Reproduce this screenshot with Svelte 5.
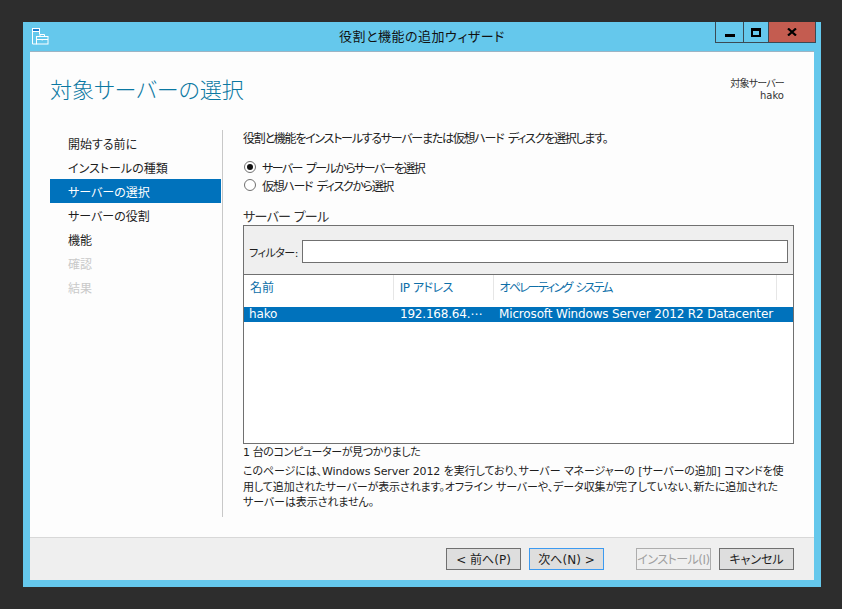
<script>
  const steps = [
    { label: '開始する前に' },
    { label: 'インストールの種類' },
    { label: 'サーバーの選択', active: true },
    { label: 'サーバーの役割' },
    { label: '機能' },
    { label: '確認', disabled: true },
    { label: '結果', disabled: true }
  ];
</script>

<div class="window">
  <div class="titlebar">
    <svg class="appicon" width="17" height="17" viewBox="0 0 17 17">
      <rect x="0.500" y="0.500" width="7" height="3" fill="#1f7fd0" stroke="#fff"/>
      <path d="M0.500 3.500v12.500h4M7.500 3.500v3" fill="none" stroke="#fff"/>
      <rect x="4.500" y="8.500" width="11.500" height="7.500" fill="#65c8ec" stroke="#fff"/>
      <path d="M8 8.500V6.500h4.500v2M5 11.500h11M10.200 11v1.500" fill="none" stroke="#fff"/>
    </svg>
    <div class="title">役割と機能の追加ウィザード</div>
    <div class="controls">
      <div class="ctl min"><span></span></div>
      <div class="ctl max"><span></span></div>
      <div class="ctl close">
        <svg width="10" height="8" viewBox="0 0 10 8"><path d="M1 0.500 9 7.500M9 0.500 1 7.500" stroke="#000" stroke-width="2.200" fill="none"/></svg>
      </div>
    </div>
  </div>

  <div class="content">
    <header class="head">
      <h1>対象サーバーの選択</h1>
      <div class="target">
        <div class="tlabel">対象サーバー</div>
        <div>hako</div>
      </div>
    </header>

    <div class="body">
      <nav class="nav">
        {#each steps as s}
          <div class="step" class:active={s.active} class:disabled={s.disabled}>{s.label}</div>
        {/each}
      </nav>

      <main class="main">
        <p class="intro">役割と機能をインストールするサーバーまたは仮想ハード ディスクを選択します。</p>
        <div class="radios">
          <label class="radio r1"><span class="dot on"></span>サーバー プールからサーバーを選択</label>
          <label class="radio r2"><span class="dot"></span>仮想ハード ディスクから選択</label>
        </div>
        <div class="poolhead">サーバー プール</div>
        <div class="pool">
          <div class="filter">
            <span class="flabel">フィルター:</span>
            <div class="finput"></div>
          </div>
          <div class="table">
            <div class="thead">
              <div class="th c1">名前</div>
              <div class="th c2 ip">IP アドレス</div>
              <div class="th c3 os">オペレーティング システム</div>
              <div class="th c4"></div>
            </div>
            <div class="row">
              <div class="td c1">hako</div>
              <div class="td c2">192.168.64.⋯</div>
              <div class="td c3">Microsoft Windows Server 2012 R2 Datacenter</div>
            </div>
          </div>
        </div>
        <div class="count">1 台のコンピューターが見つかりました</div>
        <p class="note">このページには、Windows Server 2012 を実行しており、サーバー マネージャーの [サーバーの追加] コマンドを使<br/>用して追加されたサーバーが表示されます。オフライン サーバーや、データ収集が完了していない、新たに追加された<br/>サーバーは表示されません。</p>
      </main>
    </div>

    <footer class="foot">
      <button class="btn">&lt; 前へ(P)</button>
      <button class="btn next">次へ(N) &gt;</button>
      <button class="btn install" disabled>インストール(I)</button>
      <button class="btn">キャンセル</button>
    </footer>
  </div>
</div>

<style>
  :global(body) {
    margin: 0;
    background: #2d2d2d;
  }
  .window {
    box-sizing: border-box;
    margin: 22px 0 0 23px;
    width: 798px;
    height: 565px;
    background: #65c8ec;
    padding: 0 7px 7px;
    display: flex;
    flex-direction: column;
    font-family: "DejaVu Sans", "Noto Sans CJK JP", sans-serif;
    font-feature-settings: "palt";
    font-size: 12px;
    color: #1e1e1e;
    overflow: hidden;
  }
  .titlebar {
    height: 30px;
    flex: none;
    display: flex;
    position: relative;
    align-items: flex-start;
  }
  .appicon {
    margin: 6px 0 0 2px;
  }
  .title {
    position: absolute;
    left: 0;
    right: 0;
    top: 5px;
    text-align: center;
    font-size: 13px;
    line-height: 20px;
    color: #111;
    letter-spacing: 0.5px;
  }
  .controls {
    position: absolute;
    top: 0;
    right: -2px;
    display: flex;
    height: 21px;
    border: 1px solid #3b4a54;
    border-top: 0;
    box-sizing: border-box;
  }
  .ctl {
    display: flex;
    align-items: center;
    justify-content: center;
    height: 20px;
    box-sizing: border-box;
  }
  .min { width: 28px; border-right: 1px solid #3b4a54; }
  .min span { width: 10px; height: 3px; background: #000; margin-top: 6px; }
  .max { width: 25px; border-right: 1px solid #3b4a54; }
  .max span { width: 6px; height: 4px; border: 2px solid #000; border-top-width: 3px; }
  .close { width: 46px; background: #c45c50; }

  .content {
    flex: 1;
    display: flex;
    flex-direction: column;
    background: #fdfdfd;
    border-top: 1px solid #9db4c4;
    margin-top: -1px;
    min-height: 0;
  }
  .head {
    height: 78px;
    flex: none;
    display: flex;
    justify-content: space-between;
    padding: 0 30px 0 20px;
    box-sizing: border-box;
  }
  h1 {
    margin: 24px 0 0;
    font-size: 22px;
    font-weight: 300;
    line-height: 30px;
    color: #0b78a2;
  }
  .target {
    margin-top: 26px;
    text-align: right;
    font-size: 10px;
    line-height: 11.500px;
    color: #333;
  }
  .tlabel { letter-spacing: -0.8px; }
  .body {
    flex: 1;
    display: flex;
    min-height: 0;
    padding-left: 20px;
  }
  .nav {
    width: 171px;
    flex: none;
    margin-bottom: 20px;
    padding: 1px 1px 0 0;
    border-right: 1px solid #c8c8c8;
  }
  .step {
    height: 24px;
    line-height: 28px;
    padding-left: 18px;
    font-size: 12px;
  }
  .step.active { background: #0072bc; color: #fff; }
  .step.disabled { color: #c9c9c9; }
  .main {
    margin-left: 20px;
    width: 551px;
    padding-top: 1px;
  }
  .intro {
    margin: 0;
    height: 25px;
    line-height: 16px;
    color: #222;
    letter-spacing: -1.25px;
    word-spacing: 2px;
    white-space: nowrap;
  }
  .radios { margin-top: 2px; word-spacing: 2px; }
  .r1 { letter-spacing: -1.6px; }
  .r2 { letter-spacing: -1.35px; }
  .radio {
    display: flex;
    align-items: center;
    height: 18px;
    gap: 6px;
    padding-left: 1px;
  }
  .dot {
    box-sizing: border-box;
    width: 12px;
    height: 12px;
    border-radius: 50%;
    border: 1px solid #707070;
    background: #fff;
    display: flex;
    align-items: center;
    justify-content: center;
    flex: none;
  }
  .dot.on::after {
    content: "";
    width: 6px;
    height: 6px;
    border-radius: 50%;
    background: #111;
  }
  .poolhead {
    margin-top: 13px;
    height: 18px;
    font-size: 13px;
    line-height: 19px;
    color: #333;
    letter-spacing: -0.7px;
  }
  .pool {
    border: 1px solid #707070;
    height: 219px;
    box-sizing: border-box;
    display: flex;
    flex-direction: column;
    background: #fff;
  }
  .filter {
    background: #efefef;
    border-bottom: 1px solid #707070;
    display: flex;
    align-items: center;
    padding: 3px 5px 0 5px;
    flex: none;
    height: 45px;
  }
  .flabel { width: 53px; flex: none; font-size: 11px; letter-spacing: -0.5px; }
  .finput {
    flex: 1;
    height: 23px;
    box-sizing: border-box;
    border: 1px solid #707070;
    background: #fff;
  }
  .thead { display: flex; height: 31px; }
  .th {
    color: #0e6fa8;
    border-right: 1px solid #e6e6e6;
    height: 25px;
    line-height: 26px;
    padding-left: 6px;
    box-sizing: border-box;
    white-space: nowrap;
  }
  .ip { letter-spacing: -0.5px; }
  .os { letter-spacing: -1.85px; word-spacing: 2px; }
  .row {
    display: flex;
    height: 15px;
    margin-top: 1px;
    background: #0072bc;
    color: #fff;
    line-height: 15px;
  }
  .td { padding-left: 5px; box-sizing: border-box; white-space: nowrap; letter-spacing: -0.15px; }
  .td.c2 { padding-left: 6px; letter-spacing: -0.2px; }
  .c1 { width: 150px; }
  .c2 { width: 100px; }
  .c3 { width: 284px; }
  .c4 { width: 16px; border-right: 0; }
  .count {
    line-height: 16px;
    height: 19px;
    font-size: 11px;
    padding-top: 1px;
    letter-spacing: -0.4px;
  }
  .note {
    margin: 0;
    line-height: 15.500px;
    font-size: 11px;
    white-space: nowrap;
    letter-spacing: -0.1px;
  }
  .foot {
    height: 43px;
    flex: none;
    background: #efefef;
    border-top: 1px solid #d8d8d8;
    box-sizing: border-box;
    display: flex;
    justify-content: flex-end;
    align-items: flex-start;
    padding: 10px 20px 0 0;
    gap: 8px;
  }
  .btn {
    width: 75px;
    height: 22px;
    box-sizing: border-box;
    border: 1px solid #707070;
    background: #dedede;
    font: inherit;
    font-feature-settings: "palt";
    color: #1e1e1e;
    padding: 2px 0 0;
    line-height: 18px;
  }
  .next { border-color: #3c9af0; margin-right: 24px; }
  .install { border-color: #adadad; color: #a0a0a0; background: #efefef; white-space: nowrap; letter-spacing: -0.5px; }
</style>
